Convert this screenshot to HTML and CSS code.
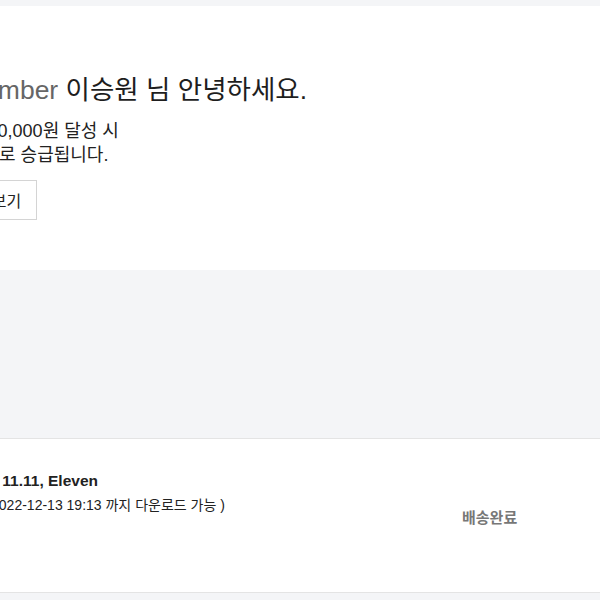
FILE: index.html
```html
<!DOCTYPE html>
<html lang="ko">
<head>
    <meta charset="UTF-8">
    <meta name="viewport" content="width=device-width, initial-scale=1.0">
    <title>마이페이지</title>
    <link rel="stylesheet" href="styles.css">
</head>
<body>
    <div class="mypage">
        <section class="member">
            <div class="member-inner">
                <h1 class="greeting"><span class="grade">Member</span> 이승원 님 안녕하세요.</h1>
                <p class="next-grade">총100,000원 달성 시<br>Gold로 승급됩니다.</p>
                <button class="btn-benefit">더보기</button>
            </div>
        </section>

        <section class="summary"></section>

        <section class="order">
            <div class="order-inner">
                <div class="order-info">
                    <p class="order-title">IU 11.11, Eleven</p>
                    <p class="order-date">( 2022-12-13 19:13 까지 다운로드 가능 )</p>
                </div>
                <div class="order-status">배송완료</div>
            </div>
        </section>
    </div>
</body>
</html>
```

FILE: styles.css
```css
* {
    margin: 0;
    padding: 0;
    box-sizing: border-box;
}
html, body {
    overflow: hidden;
}
body {
    font-family: 'Liberation Sans', Arial, 'Noto Sans CJK KR', sans-serif;
    background-color: #f4f5f7;
    color: #222;
    width: 600px;
}
.mypage {
    padding-top: 6px;
}
.member {
    background-color: #fff;
    height: 264px;
    padding-top: 68px;
}
.member-inner {
    margin-left: -39px;
}
.greeting {
    font-size: 26.5px;
    font-weight: normal;
    line-height: 32px;
    color: #1e1e1e;
    white-space: nowrap;
}
.grade {
    color: #666;
}
.next-grade {
    margin-top: 13px;
    font-size: 18px;
    line-height: 24px;
    white-space: nowrap;
}
.btn-benefit {
    margin-top: 13px;
    height: 40px;
    padding: 0 15px;
    font-family: inherit;
    font-size: 16px;
    color: #222;
    background-color: #fff;
    border: 1px solid #d4d4d4;
}
.summary {
    height: 168px;
}
.order {
    background-color: #fff;
    border-top: 1px solid #e4e4e4;
    border-bottom: 1px solid #e4e4e4;
    height: 155px;
}
.order-inner {
    display: flex;
    align-items: center;
    height: 100%;
    margin-left: -17.5px;
}
.order-info {
    flex: 1;
    padding-bottom: 46px;
}
.order-title {
    font-size: 15.5px;
    font-weight: bold;
    line-height: 22px;
    white-space: nowrap;
}
.order-date {
    margin-top: 2px;
    font-size: 14px;
    line-height: 22px;
    white-space: nowrap;
}
.order-status {
    width: 138px;
    font-size: 15px;
    font-weight: bold;
    color: #777;
    padding-top: 2px;
}
```
